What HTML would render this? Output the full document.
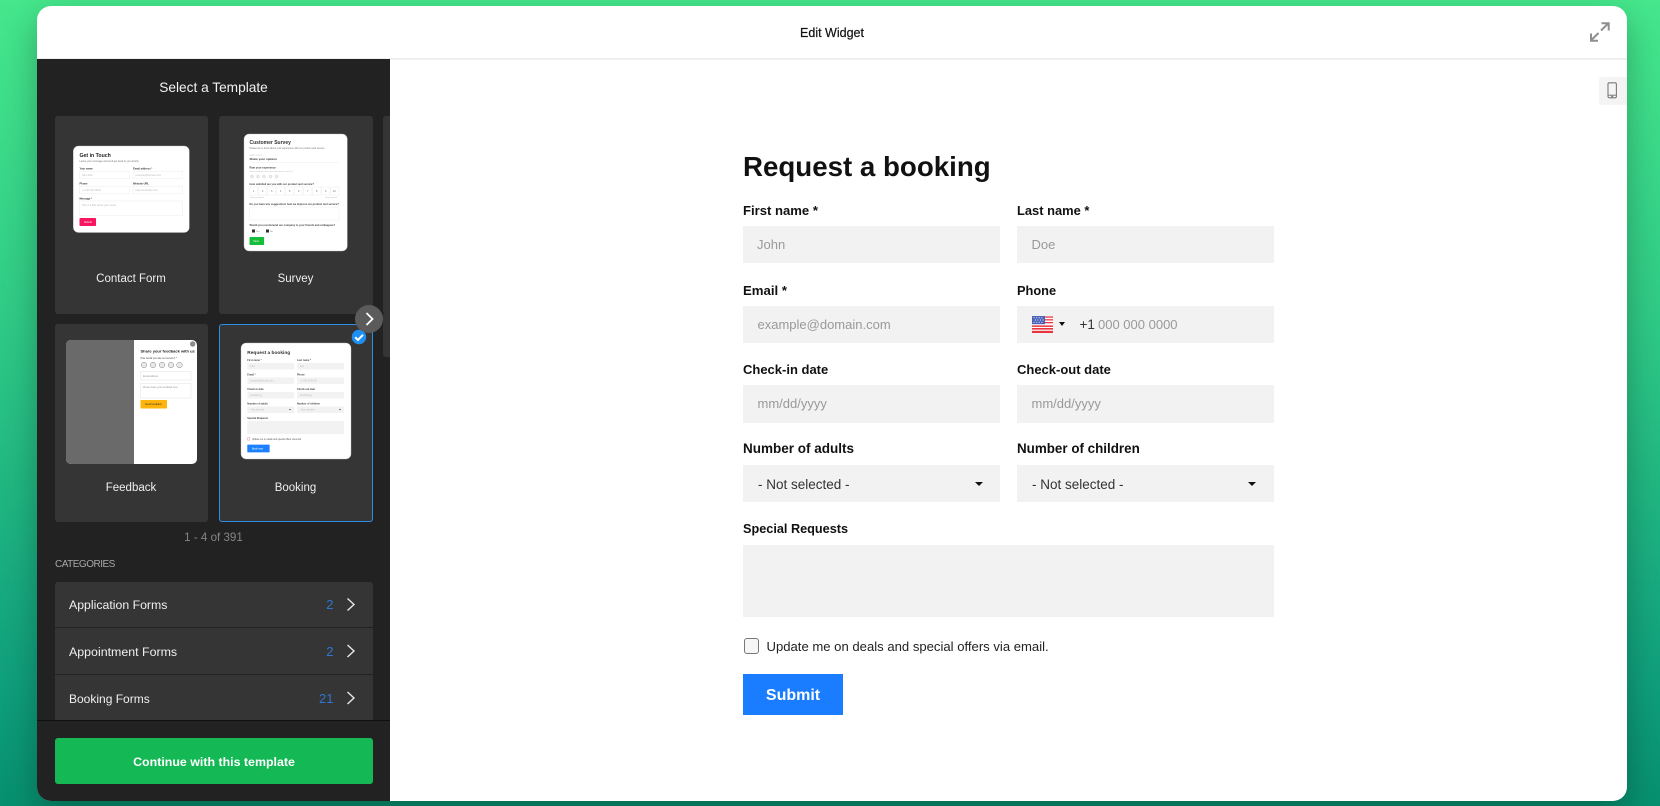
<!DOCTYPE html>
<html lang="en">
<head>
<meta charset="utf-8">
<title>Edit Widget</title>
<style>
html,body{margin:0;padding:0;width:1660px;height:806px;overflow:hidden}
body{position:relative;font-family:"Liberation Sans",sans-serif;background:linear-gradient(180deg,#45e78c 0%,#2fca86 40%,#0f9f7c 85%,#07906f 100%)}
.a{position:absolute}
.t{position:absolute;white-space:nowrap;height:20px;line-height:20px}
#win{left:37px;top:6px;width:1590px;height:795px;background:#fff;border-radius:14px;box-shadow:0 12px 34px rgba(0,0,0,.28)}
#side{left:37px;top:59px;width:353px;height:742px;background:#222;border-bottom-left-radius:14px;overflow:hidden}
.card{position:absolute;background:#353535;border-radius:3px;box-sizing:border-box}
.c{text-align:center;transform:translateX(-50%)}
.lab{font-weight:700;color:#111}
.in{position:absolute;background:#f2f2f2}
.ph{font-size:13px;color:#999}
.sel{font-size:13.5px;color:#333}
.car{position:absolute;width:0;height:0;border-left:4.5px solid transparent;border-right:4.5px solid transparent;border-top:4.5px solid #111}
.row{position:absolute;left:55px;width:318px;background:#353535}
.cat{color:#f0f0f0}
.cnt{font-size:13px;color:#2f76cf;text-align:right;width:30px;left:303.5px}
.cl{font-size:11.5px;color:#efefef}
</style>
</head>
<body>
<div id="win" class="a"></div>
<div class="a" style="left:37px;top:58px;width:1590px;height:2px;background:#efefef"></div>
<div class="t c" style="left:832px;top:23px;font-size:12.5px;color:#111;-webkit-text-stroke:.2px #111">Edit Widget</div>

<svg class="a" style="left:1588px;top:20px" width="24" height="24" viewBox="0 0 24 24" fill="none" stroke="#8f8f8f" stroke-width="2">
<path d="M2.9 20.5L10.5 13M3 13.5V20.8H10M20.7 3L13 10.5M13.5 3.2H20.7V10.5"/>
</svg>
<div class="a" style="left:1599px;top:77px;width:28px;height:28px;background:#f4f4f4;border-radius:3px 0 0 3px"></div>
<svg class="a" style="left:1607px;top:82px" width="11" height="17" viewBox="0 0 11 17" fill="none" stroke="#7a7a7a" stroke-width="1.1">
<rect x="1" y="0.8" width="8.4" height="15" rx="1.3"/><path d="M1 13.2H9.4" stroke-width="1"/><circle cx="5.2" cy="14.5" r=".5" fill="#7a7a7a"/>
</svg>

<div id="side" class="a"></div>
<div class="t c" style="left:213.5px;top:78px;font-size:13.7px;color:#f2f2f2">Select a Template</div>

<div class="card" style="left:55px;top:116px;width:153px;height:198px"></div>
<div class="card" style="left:219px;top:116px;width:154px;height:198px"></div>
<div class="card" style="left:383px;top:116px;width:7px;height:198px;border-radius:3px 0 0 3px"></div>
<div class="a" style="left:383px;top:314px;width:7px;height:43px;background:#353535;border-radius:0 0 0 3px"></div>
<div class="card" style="left:55px;top:324px;width:153px;height:198px"></div>
<div class="card" style="left:219px;top:324px;width:154px;height:198px;border:1px solid #2f8fe6"></div>

<svg class="a" style="left:0;top:0" width="1660" height="806" font-family="Liberation Sans, sans-serif">
<defs><filter id="b" x="-5%" y="-5%" width="110%" height="110%"><feGaussianBlur stdDeviation=".35"/></filter></defs>
<g filter="url(#b)">
<!-- Contact -->
<rect x="73.3" y="146" width="116" height="86.5" rx="5" fill="#fff" stroke="#bdbdbd" stroke-width=".4"/>
<text x="79.5" y="157" font-size="5.2" font-weight="700" fill="#222">Get in Touch</text>
<text x="79.5" y="162.2" font-size="2.5" fill="#777">Leave your message and we'll get back to you shortly.</text>
<text x="79.5" y="169.4" font-size="2.6" font-weight="700" fill="#333">Your name</text>
<text x="133" y="169.4" font-size="2.6" font-weight="700" fill="#333">Email address *</text>
<rect x="79.5" y="171.2" width="50" height="7.6" fill="#fff" stroke="#ececec" stroke-width=".5"/>
<rect x="133" y="171.2" width="49.5" height="7.6" fill="#fff" stroke="#ececec" stroke-width=".5"/>
<text x="82" y="176" font-size="2.5" fill="#bbb">John Doe</text>
<text x="135.5" y="176" font-size="2.5" fill="#bbb">example@domain.com</text>
<text x="79.5" y="184.4" font-size="2.6" font-weight="700" fill="#333">Phone</text>
<text x="133" y="184.4" font-size="2.6" font-weight="700" fill="#333">Website URL</text>
<rect x="79.5" y="186.2" width="50" height="7.6" fill="#fff" stroke="#ececec" stroke-width=".5"/>
<rect x="133" y="186.2" width="49.5" height="7.6" fill="#fff" stroke="#ececec" stroke-width=".5"/>
<text x="82" y="191" font-size="2.5" fill="#bbb">+1 000 000 0000</text>
<text x="135.5" y="191" font-size="2.5" fill="#bbb">https://example.com</text>
<text x="79.5" y="199.4" font-size="2.6" font-weight="700" fill="#333">Message *</text>
<rect x="79.5" y="201" width="103" height="14.5" fill="#fff" stroke="#ececec" stroke-width=".5"/>
<text x="82" y="206" font-size="2.5" fill="#bbb">Tell us a little about your needs</text>
<rect x="79.5" y="218" width="16.5" height="8" rx=".8" fill="#f7185f"/>
<text x="84" y="223" font-size="2.5" fill="#fff">Submit</text>

<!-- Survey -->
<rect x="244" y="134" width="103.3" height="117" rx="5" fill="#fff" stroke="#bdbdbd" stroke-width=".4"/>
<text x="249.5" y="144" font-size="5" font-weight="700" fill="#333">Customer Survey</text>
<text x="249.5" y="149.2" font-size="2.4" fill="#777">Please let us know about your experience with our product and service.</text>
<text x="249.5" y="156" font-size="2.1" fill="#bbb">STEP 1 OF 3</text>
<text x="249.5" y="160" font-size="3" font-weight="700" fill="#333">Share your opinion</text>
<path d="M249.5 162.5H339" stroke="#ececec" stroke-width=".5"/>
<text x="249.5" y="168.5" font-size="2.6" font-weight="700" fill="#444">Rate your experience</text>
<text x="249.5" y="172" font-size="2.2" fill="#bbb">How would you rate your experience with us?</text>
<g fill="#e6e6e6"><circle cx="252" cy="176.5" r="1.9"/><circle cx="258" cy="176.5" r="1.9"/><circle cx="264" cy="176.5" r="1.9"/><circle cx="270.5" cy="176.5" r="1.9"/><circle cx="276.5" cy="176.5" r="1.9"/></g>
<text x="249.5" y="185" font-size="2.6" font-weight="700" fill="#444">How satisfied are you with our product and service?</text>
<g fill="#fff" stroke="#eeeeee" stroke-width=".5"><rect x="249.5" y="187" width="8.4" height="8"/><rect x="258.5" y="187" width="8.4" height="8"/><rect x="267.5" y="187" width="8.4" height="8"/><rect x="276.5" y="187" width="8.4" height="8"/><rect x="285.5" y="187" width="8.4" height="8"/><rect x="294.5" y="187" width="8.4" height="8"/><rect x="303.5" y="187" width="8.4" height="8"/><rect x="312.5" y="187" width="8.4" height="8"/><rect x="321.5" y="187" width="8.4" height="8"/><rect x="330.5" y="187" width="8.4" height="8"/></g>
<g font-size="2.4" fill="#666"><text x="253" y="192">1</text><text x="262" y="192">2</text><text x="271" y="192">3</text><text x="280" y="192">4</text><text x="289" y="192">5</text><text x="298" y="192">6</text><text x="307" y="192">7</text><text x="316" y="192">8</text><text x="325" y="192">9</text><text x="333" y="192">10</text></g>
<text x="249.5" y="198" font-size="2" fill="#bbb">Very unsatisfied</text>
<text x="325" y="198" font-size="2" fill="#bbb">Very satisfied</text>
<text x="249.5" y="205" font-size="2.6" font-weight="700" fill="#444">Do you have any suggestions how we improve our product and service?</text>
<rect x="249.5" y="207" width="89.5" height="13" fill="#fff" stroke="#eeeeee" stroke-width=".5"/>
<text x="249.5" y="226" font-size="2.6" font-weight="700" fill="#444">Would you recommend our company to your friends and colleagues?</text>
<rect x="252" y="229.5" width="3" height="3" fill="#333"/><text x="256" y="232" font-size="2.2" fill="#777">Yes</text>
<rect x="266" y="229.5" width="3" height="3" fill="#333"/><text x="270" y="232" font-size="2.2" fill="#777">No</text>
<rect x="249.5" y="237" width="14.6" height="8" rx=".8" fill="#19bd38"/>
<text x="253.5" y="242" font-size="2.5" fill="#fff">Next</text>

<!-- Feedback -->
<rect x="66" y="340" width="131" height="124" rx="5" fill="#fff"/>
<path d="M71 340H134V464H71a5 5 0 0 1-5-5V345a5 5 0 0 1 5-5Z" fill="#6b6b6b"/>
<circle cx="192.7" cy="344" r="2.7" fill="#8a8a8a"/>
<text x="140.5" y="352.6" font-size="4" font-weight="700" fill="#222">Share your feedback with us</text>
<text x="140.5" y="359" font-size="2.4" fill="#444">How would you rate our service? *</text>
<g fill="#e9e9e9" stroke="#888" stroke-width=".5"><circle cx="144" cy="365" r="2.8"/><circle cx="153" cy="365" r="2.8"/><circle cx="162" cy="365" r="2.8"/><circle cx="171" cy="365" r="2.8"/><circle cx="179.5" cy="365" r="2.8"/></g>
<rect x="140.5" y="371.5" width="50.5" height="8.5" fill="#fff" stroke="#e2e2e2" stroke-width=".5"/>
<text x="143" y="376.8" font-size="2.4" fill="#999">Email address</text>
<rect x="140.5" y="383.5" width="50.5" height="14.5" fill="#fff" stroke="#e2e2e2" stroke-width=".5"/>
<text x="143" y="388.2" font-size="2.4" fill="#999">Please leave your feedback here</text>
<rect x="140.5" y="400" width="26.5" height="8.5" rx=".8" fill="#ffb30d"/>
<text x="145" y="405.2" font-size="2.5" fill="#333">Send feedback</text>

<!-- Booking -->
<rect x="241" y="343" width="110" height="116" rx="5" fill="#fff" stroke="#bdbdbd" stroke-width=".4"/>
<text x="247.3" y="354" font-size="4.8" font-weight="700" fill="#333">Request a booking</text>
<g font-size="2.5" font-weight="700" fill="#444">
<text x="247.3" y="361">First name *</text><text x="297" y="361">Last name *</text>
<text x="247.3" y="375.4">Email *</text><text x="297" y="375.4">Phone</text>
<text x="247.3" y="390">Check-in date</text><text x="297" y="390">Check-out date</text>
<text x="247.3" y="404.4">Number of adults</text><text x="297" y="404.4">Number of children</text>
<text x="247.3" y="418.8">Special Requests</text>
</g>
<g fill="#f2f2f2">
<rect x="247.3" y="363" width="47" height="6.6"/><rect x="297" y="363" width="47" height="6.6"/>
<rect x="247.3" y="377.5" width="47" height="6.6"/><rect x="297" y="377.5" width="47" height="6.6"/>
<rect x="247.3" y="392" width="47" height="6.6"/><rect x="297" y="392" width="47" height="6.6"/>
<rect x="247.3" y="406.4" width="47" height="6.6"/><rect x="297" y="406.4" width="47" height="6.6"/>
<rect x="247.3" y="421" width="96.7" height="13"/>
</g>
<g font-size="2.3" fill="#bbb">
<text x="250" y="367.2">John</text><text x="300" y="367.2">Doe</text>
<text x="250" y="381.7">example@domain.com</text><text x="300" y="381.7">+1 000 00 00 00</text>
<text x="250" y="396.2">mm/dd/yyyy</text><text x="300" y="396.2">mm/dd/yyyy</text>
<text x="250" y="410.6">- Not selected -</text><text x="300" y="410.6">- Not selected -</text>
</g>
<path d="M289 409l2 0-1 1.2zM339 409l2 0-1 1.2z" fill="#333"/>
<rect x="247.5" y="437.8" width="2.3" height="2.3" fill="#fff" stroke="#d97a7a" stroke-width=".4"/>
<text x="252" y="440" font-size="2.3" fill="#555">Update me on deals and special offers via email.</text>
<rect x="247.3" y="444.6" width="22.3" height="7.8" rx=".5" fill="#1f80ff"/>
<text x="252" y="449.5" font-size="2.5" fill="#fff">Book now</text>
</g>

<!-- check badge -->
<circle cx="359" cy="337" r="7.2" fill="#1e90f5"/>
<path d="M355.2 337.2L358 340L363 334.8" fill="none" stroke="#fff" stroke-width="2"/>
<!-- next -->
<circle cx="369" cy="319" r="14" fill="#5b5b5b"/>
<path d="M366.5 313L372.5 319L366.5 325" fill="none" stroke="#fff" stroke-width="1.8"/>
</svg>

<div class="t c cl" style="left:131px;top:269px">Contact Form</div>
<div class="t c cl" style="left:295.5px;top:269px">Survey</div>
<div class="t c cl" style="left:131px;top:478px">Feedback</div>
<div class="t c cl" style="left:295.5px;top:478px">Booking</div>
<div class="t c" style="left:213.5px;top:528px;font-size:11.6px;color:#858585">1 - 4 of 391</div>
<div class="t" style="left:55px;top:555px;font-size:10px;letter-spacing:-.5px;color:#a8a8a8">CATEGORIES</div>

<div class="row" style="top:582px;height:45px;border-radius:3px 3px 0 0"></div>
<div class="a" style="left:55px;top:627px;width:318px;height:1px;background:#222"></div>
<div class="row" style="top:628px;height:46px"></div>
<div class="a" style="left:55px;top:674px;width:318px;height:1px;background:#222"></div>
<div class="row" style="top:675px;height:45px"></div>
<div class="t cat" style="left:69px;top:595px;font-size:12.3px">Application Forms</div>
<div class="t cat" style="left:69px;top:642px;font-size:12.4px">Appointment Forms</div>
<div class="t cat" style="left:69px;top:689px;font-size:12px">Booking Forms</div>
<div class="t cnt" style="top:595px">2</div>
<div class="t cnt" style="top:642px">2</div>
<div class="t cnt" style="top:689px">21</div>
<svg class="a" style="left:345px;top:596px" width="12" height="112" fill="none" stroke="#e8e8e8" stroke-width="1.4">
<path d="M2.5 2.5L9 8.5L2.5 14.5M2.5 49L9 55L2.5 61M2.5 96L9 102L2.5 108"/>
</svg>
<div class="a" style="left:37px;top:720px;width:353px;height:1px;background:#0f0f0f"></div>
<div class="a" style="left:55px;top:738px;width:318px;height:46px;background:#14b854;border-radius:3px"></div>
<div class="t c" style="left:214px;top:752px;font-size:12.4px;font-weight:700;color:#fff">Continue with this template</div>

<!-- Form -->
<div class="t" style="left:743px;top:157px;height:20px;font-size:27.7px;font-weight:700;color:#111">Request a booking</div>

<div class="t lab" style="left:743px;top:201px;font-size:13.1px">First name *</div>
<div class="t lab" style="left:1017px;top:201px;font-size:12.9px">Last name *</div>
<div class="in" style="left:743px;top:226px;width:257px;height:37px"></div>
<div class="in" style="left:1017px;top:226px;width:257px;height:37px"></div>
<div class="t ph" style="left:757px;top:235px">John</div>
<div class="t ph" style="left:1031.5px;top:235px">Doe</div>

<div class="t lab" style="left:743px;top:281px;font-size:13.2px">Email *</div>
<div class="t lab" style="left:1017px;top:281px;font-size:12.8px">Phone</div>
<div class="in" style="left:743px;top:306px;width:257px;height:37px"></div>
<div class="in" style="left:1017px;top:306px;width:257px;height:37px"></div>
<div class="t ph" style="left:757.5px;top:315px">example@domain.com</div>
<svg class="a" style="left:1032px;top:316px" width="21" height="17" viewBox="0 0 21 17">
<rect width="21" height="17" rx="2" fill="#fff"/>
<g fill="#e8343f"><rect x="13" y="0.4" width="8" height="1.3"/><rect x="13" y="3.2" width="8" height="1.3"/><rect x="13" y="6" width="8" height="1.3"/><rect y="9.4" width="21" height="1.5"/><rect y="12" width="21" height="1.6"/><rect y="14.8" width="21" height="2.2"/></g>
<rect width="13" height="8.2" fill="#4a62b8"/>
<g fill="#dfe4f5"><circle cx="2" cy="1.7" r=".6"/><circle cx="4.6" cy="1.7" r=".6"/><circle cx="7.2" cy="1.7" r=".6"/><circle cx="9.8" cy="1.7" r=".6"/><circle cx="3.3" cy="4" r=".6"/><circle cx="5.9" cy="4" r=".6"/><circle cx="8.5" cy="4" r=".6"/><circle cx="11" cy="4" r=".6"/><circle cx="2" cy="6.3" r=".6"/><circle cx="4.6" cy="6.3" r=".6"/><circle cx="7.2" cy="6.3" r=".6"/><circle cx="9.8" cy="6.3" r=".6"/></g>
</svg>
<div class="car" style="left:1058.5px;top:322px;border-left-width:3.5px;border-right-width:3.5px;border-top-width:4px"></div>
<div class="t" style="left:1079.5px;top:315px;font-size:13.5px;color:#333">+1</div>
<div class="t ph" style="left:1098px;top:315px">000 000 0000</div>

<div class="t lab" style="left:743px;top:360px;font-size:13px">Check-in date</div>
<div class="t lab" style="left:1017px;top:360px;font-size:13px">Check-out date</div>
<div class="in" style="left:743px;top:385px;width:257px;height:38px"></div>
<div class="in" style="left:1017px;top:385px;width:257px;height:38px"></div>
<div class="t ph" style="left:757.5px;top:394px">mm/dd/yyyy</div>
<div class="t ph" style="left:1031.5px;top:394px">mm/dd/yyyy</div>

<div class="t lab" style="left:743px;top:439px;font-size:13.5px">Number of adults</div>
<div class="t lab" style="left:1017px;top:439px;font-size:13.4px">Number of children</div>
<div class="in" style="left:743px;top:465px;width:257px;height:37px"></div>
<div class="in" style="left:1017px;top:465px;width:257px;height:37px"></div>
<div class="t sel" style="left:758px;top:475px">- Not selected -</div>
<div class="t sel" style="left:1032px;top:475px">- Not selected -</div>
<div class="car" style="left:974.5px;top:482px"></div>
<div class="car" style="left:1248px;top:482px"></div>

<div class="t lab" style="left:743px;top:519px;font-size:12.7px">Special Requests</div>
<div class="in" style="left:743px;top:545px;width:531px;height:72px"></div>

<div class="a" style="left:744px;top:638px;width:13px;height:14px;border:1.2px solid #777;border-radius:3px;background:#f6f6f6"></div>
<div class="t" style="left:766.5px;top:636.5px;font-size:13.1px;color:#222">Update me on deals and special offers via email.</div>

<div class="a" style="left:743px;top:674px;width:100px;height:41px;background:#1a7dff"></div>
<div class="t c" style="left:793px;top:685.5px;font-size:16px;font-weight:700;color:#fff">Submit</div>
</body>
</html>
